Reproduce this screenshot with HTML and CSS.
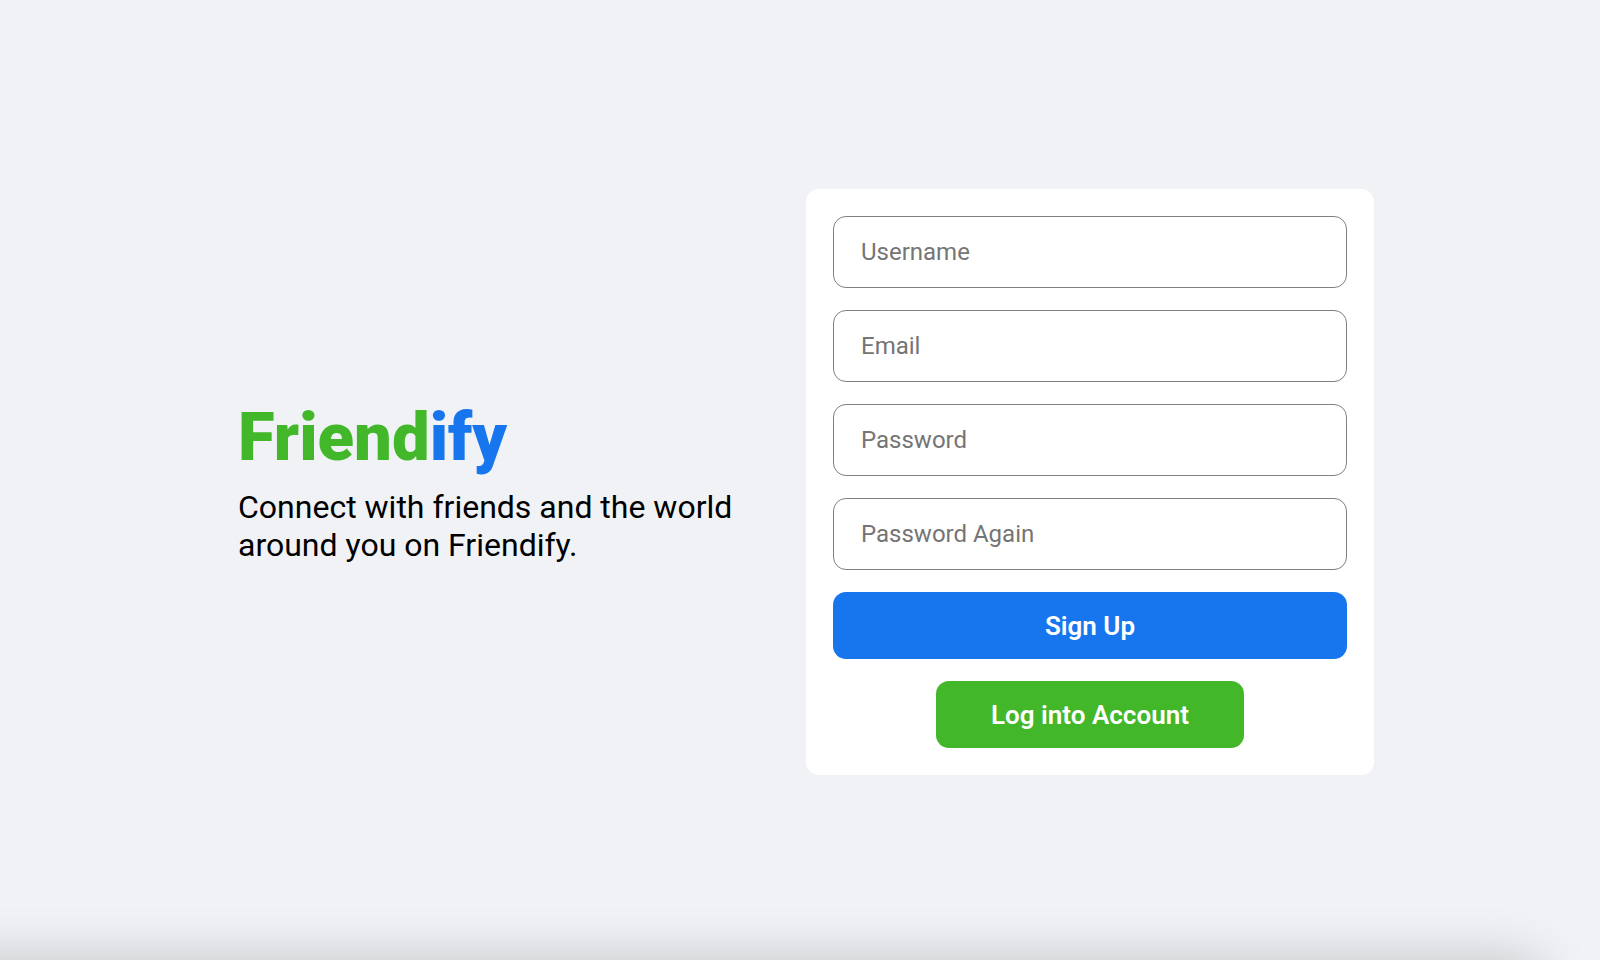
FILE: index.html
```html
<!DOCTYPE html>
<html lang="en">
<head>
<meta charset="utf-8">
<title>Friendify</title>
<link rel="stylesheet" href="styles.css">
</head>
<body>
<main class="register">
  <div class="wrapper">
    <section class="intro">
      <h1 class="logo">Friend<span class="logo-accent">ify</span></h1>
      <p class="tagline">Connect with friends and the world around you on Friendify.</p>
    </section>
    <section class="panel">
      <form class="box">
        <input class="field" type="text" placeholder="Username" aria-label="Username">
        <input class="field" type="email" placeholder="Email" aria-label="Email">
        <input class="field" type="password" placeholder="Password" aria-label="Password">
        <input class="field" type="password" placeholder="Password Again" aria-label="Password Again">
        <button class="button signup" type="submit">Sign Up</button>
        <button class="button login" type="button">Log into Account</button>
      </form>
    </section>
  </div>
  <div class="edge-shadow"></div>
</main>
</body>
</html>
```
FILE: styles.css
```css
* {
  box-sizing: border-box;
}

body {
  margin: 0;
  font-family: Roboto, "Liberation Sans", sans-serif;
}

.register {
  position: relative;
  display: flex;
  align-items: center;
  justify-content: center;
  min-height: 100vh;
  padding: 4px 0 0 12px;
  overflow: hidden;
  background: #f0f2f5;
}

.wrapper {
  display: flex;
  width: 71vw;
}

.intro,
.panel {
  flex: 1;
  min-width: 0;
}

.intro {
  display: flex;
  flex-direction: column;
  justify-content: center;
  padding-bottom: 2px;
}

.logo {
  margin: 0 0 12px;
  color: #42b72a;
  font-size: 67px;
  font-weight: 900;
  line-height: 78px;
}

.logo-accent {
  color: #1775ee;
}

.tagline {
  margin: 0;
  font-size: 32px;
  line-height: 38px;
}

.box {
  display: flex;
  flex-direction: column;
  gap: 22px;
  padding: 27px;
  border-radius: 13px;
  background: #fff;
}

.field {
  width: 100%;
  height: 72px;
  padding: 0 27px;
  border: 1px solid gray;
  border-radius: 13px;
  background: #fff;
  font: 24px Roboto, "Liberation Sans", sans-serif;
}

.field::placeholder {
  color: #757575;
}

.button {
  height: 67px;
  border: 0;
  border-radius: 13px;
  color: #fff;
  font: 600 26px Roboto, "Liberation Sans", sans-serif;
  cursor: pointer;
}

.signup {
  background: #1775ee;
}

.login {
  align-self: center;
  width: 60%;
  background: #42b72a;
}

.edge-shadow {
  position: absolute;
  top: 100%;
  left: -60px;
  right: 60px;
  height: 80px;
  border-radius: 16px;
  box-shadow: 0 0 54px rgba(0, 0, 0, 0.2);
}
```
